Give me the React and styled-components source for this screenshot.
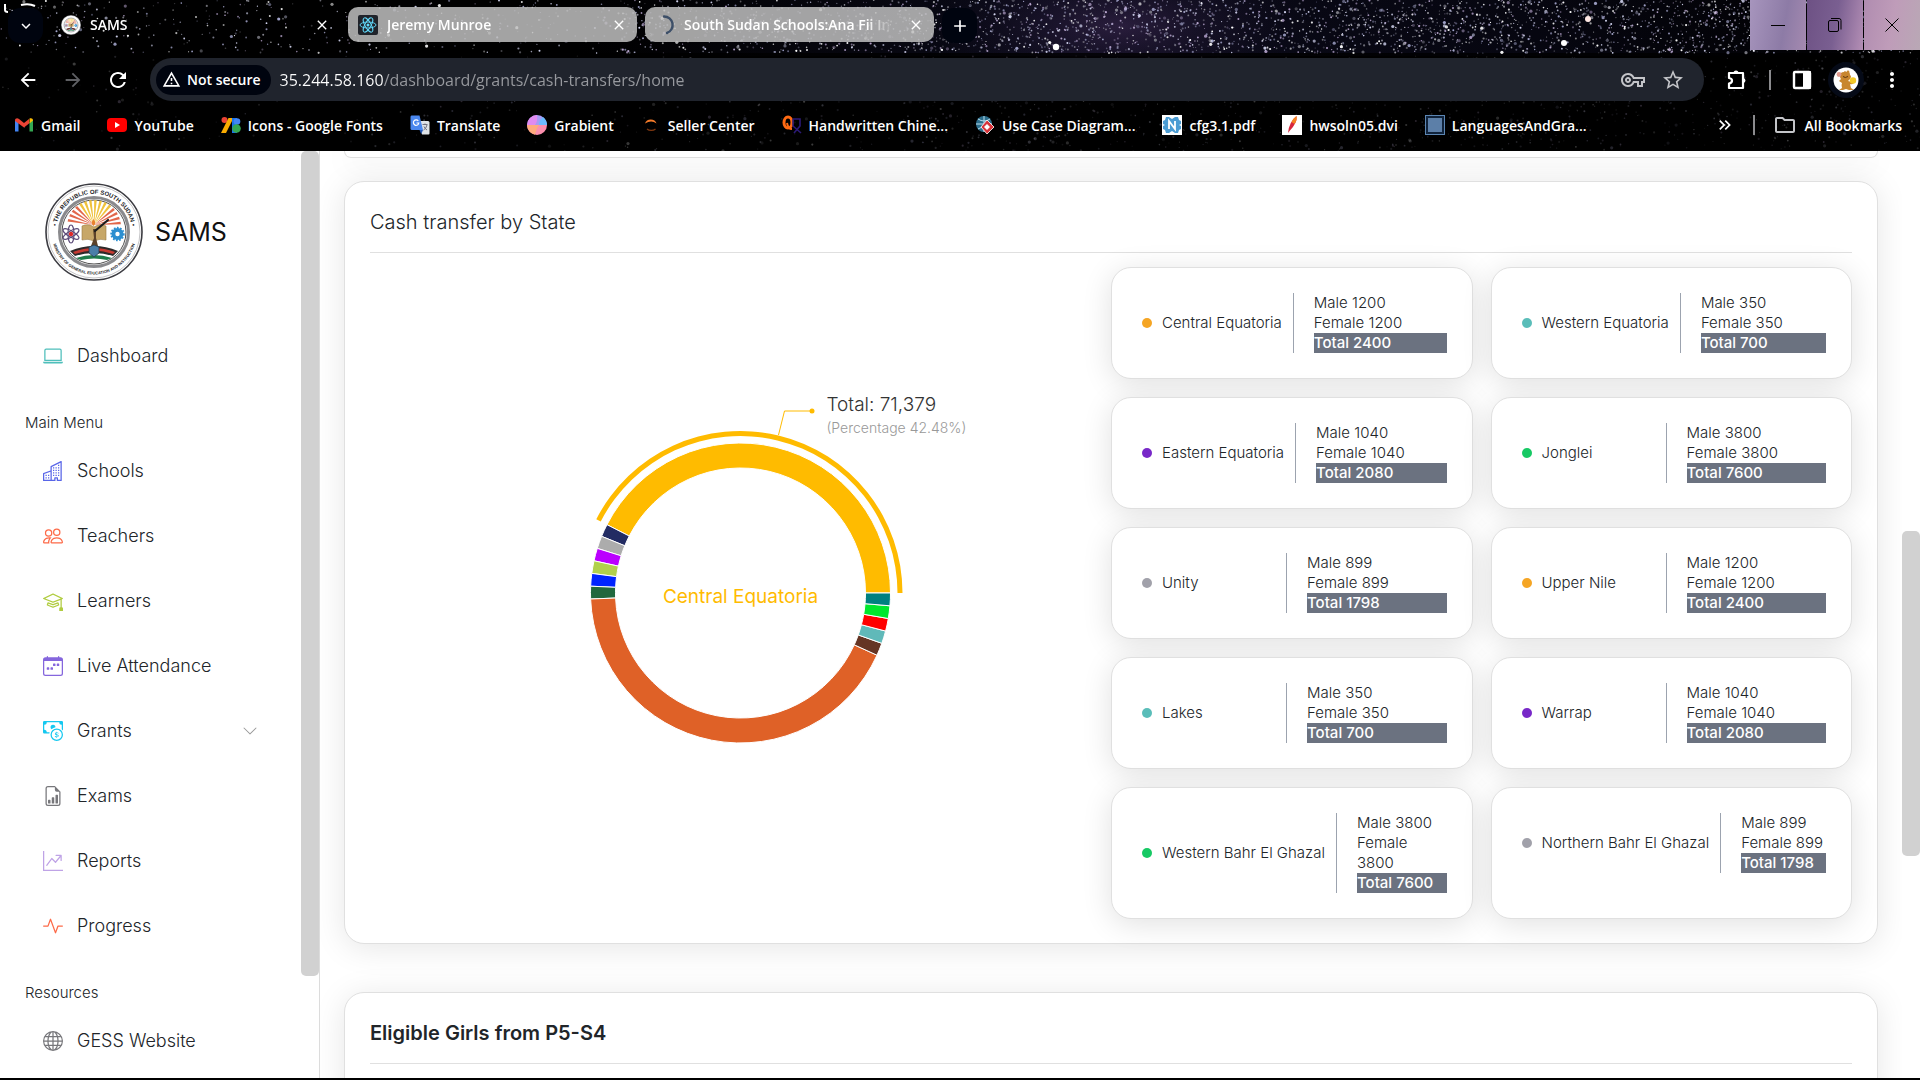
import React from 'react';
import styled, { createGlobalStyle } from 'styled-components';
import {
  BsLaptop, BsBuildings, BsPeople, BsMortarboard, BsCalendarWeek, BsCashCoin,
  BsFileEarmarkBarGraph, BsGraphUpArrow, BsActivity, BsGlobe, BsChevronDown,
} from 'react-icons/bs';
import {
  MdArrowBack, MdArrowForward, MdRefresh, MdOutlineWarningAmber, MdOutlineVpnKey,
  MdStarBorder, MdMoreVert, MdOutlineFolder, MdClose, MdAdd, MdExpandMore, MdKeyboardDoubleArrowRight,
} from 'react-icons/md';

const GlobalStyle = createGlobalStyle`
  *, *::before, *::after { box-sizing: border-box; }
  body { margin: 0; background: #fff; font-family: Inter, "Liberation Sans", sans-serif; font-weight: 300; color: #212529; overflow: hidden; }
  button { border: 0; padding: 0; margin: 0; background: none; color: inherit; font: inherit; cursor: pointer; }
  a { color: inherit; text-decoration: none; }
  svg { display: block; flex: none; }
  h1, h2, p { margin: 0; font-weight: inherit; }
`;

const Shell = styled.div`
  display: flex;
  flex-direction: column;
  height: 100vh;
  border-bottom: 2px solid #000;
`;

/* ---------- browser frame ---------- */

const Chrome = styled.header`
  position: relative;
  flex: none;
  background: #000;
  color: #fff;
  font-family: "Open Sans", "Noto Sans", sans-serif;
  font-size: 14px;
  font-weight: 600;
`;

const Sky = styled.svg`
  position: absolute;
  inset: 0;
  width: 100%;
  height: 100%;
`;

const ChromeRows = styled.div`
  position: relative;
`;

const TabStrip = styled.div`
  display: flex;
  align-items: flex-start;
  height: 58px;
  padding-left: 8px;
`;

const RoundButton = styled.button`
  display: flex;
  align-items: center;
  justify-content: center;
  width: 35px;
  height: 35px;
  margin: 8px 0 0 ${(p) => (p.$apart ? 8 : 0)}px;
  border-radius: 12px;
  background: #00040f;
`;

const Tab = styled.div`
  display: flex;
  align-items: center;
  gap: 9px;
  width: 289px;
  height: 35px;
  margin: 7px 0 0 8px;
  padding: 0 10px;
  border-radius: 10px;
  background: ${(p) => (p.$active ? 'transparent' : 'rgba(190, 190, 190, 0.86)')};
`;

const TabTitle = styled.button`
  flex: 1;
  min-width: 0;
  overflow: hidden;
  white-space: nowrap;
  text-align: left;
  mask-image: linear-gradient(to right, #000 85%, transparent 97%);
`;

const WindowControls = styled.div`
  display: flex;
  gap: 1px;
  height: 50px;
  margin-left: auto;
`;

const WindowButton = styled.button`
  display: flex;
  align-items: center;
  justify-content: center;
  width: 56px;
  color: #000;
  background: ${(p) => p.$sky};
`;

const Toolbar = styled.div`
  display: flex;
  align-items: center;
  height: 43px;
`;

const NavButton = styled.button`
  display: flex;
  align-items: center;
  justify-content: center;
  width: 45px;
  height: 35px;
  color: ${(p) => (p.$dim ? '#5f6064' : '#fff')};
`;

const NavGroup = styled.div`
  display: flex;
  padding: 0 10px 0 5px;
`;

const AddressBar = styled.div`
  display: flex;
  align-items: center;
  flex: 1;
  height: 43px;
  padding: 0 19px 0 6px;
  border-radius: 22px;
  background: #20242d;
  color: #c3c4c8;
`;

const SecurityChip = styled.button`
  display: flex;
  align-items: center;
  gap: 6px;
  height: 30px;
  padding: 0 10px 0 6px;
  border-radius: 15px;
  background: #00040f;
  color: #fff;
`;

const UrlInput = styled.input`
  flex: 1;
  min-width: 0;
  margin-left: 9px;
  padding: 0;
  border: 0;
  outline: 0;
  font: 400 16px/24px "Open Sans", "Noto Sans", sans-serif;
  color: transparent;
  background: linear-gradient(to right, #fff 104px, #989a9f 104px);
  -webkit-background-clip: text;
  background-clip: text;
`;

const BarIcons = styled.div`
  display: flex;
  align-items: center;
  gap: 16px;
`;

const ToolbarEnd = styled.div`
  display: flex;
  align-items: center;
  padding: 0 16px 0 22px;
  gap: 21px;
`;

const ProfileButton = styled.button`
  margin: 0 -5px;
`;

const Separator = styled.span`
  width: 2px;
  height: 20px;
  background: #8b8b8e;
`;

const Bookmarks = styled.nav`
  display: flex;
  align-items: center;
  height: 50px;
  padding: 0 18px 2px 14px;
`;

const BookmarkLink = styled.a`
  display: flex;
  align-items: center;
  gap: 7px;
  margin-right: 27px;
  white-space: nowrap;
`;

const BookmarksEnd = styled.div`
  display: flex;
  align-items: center;
  gap: 18px;
  margin-left: auto;
`;

const AllBookmarks = styled.button`
  display: flex;
  align-items: center;
  gap: 8px;
`;

/* ---------- page ---------- */

const Page = styled.div`
  display: flex;
  flex: 1;
  min-height: 0;
`;

const Sidebar = styled.aside`
  display: flex;
  flex: none;
  width: 320px;
  border-right: 1px solid #dcdcdc;
`;

const SidebarBody = styled.div`
  flex: 1;
  padding-top: 32px;
  overflow: hidden;
`;

const Brand = styled.div`
  display: flex;
  align-items: center;
  gap: 12px;
  padding: 0 0 42px 45px;
  font-size: 25px;
  font-weight: 400;
  color: #111;
`;

const NavLink = styled.a`
  display: flex;
  align-items: center;
  gap: 14px;
  height: 65px;
  padding: 0 43px;
  font-size: 18px;
  color: #212529;

  svg:first-child { color: ${(p) => p.$tint}; }
  svg + span { flex: 1; }
`;

const NavLabel = styled.p`
  height: 50px;
  padding: 23px 25px 3px;
  font-size: 15px;
  line-height: 24px;
`;

const ScrollTrack = styled.div`
  flex: none;
  width: 18px;
`;

const Thumb = styled.div`
  height: ${(p) => p.$size}%;
  border-radius: 5px;
  background: #d1d1d1;
`;

const TrackSpace = styled.div`
  height: ${(p) => p.$size}%;
`;

const Main = styled.main`
  flex: 1;
  min-width: 0;
  padding: 0 24px;
  overflow: hidden;
`;

const Panel = styled.section`
  padding: 0 25px 24px;
  margin-bottom: ${(p) => p.$space || 24}px;
  border: 1px solid #e0e0e0;
  border-radius: 20px;
  background: #fff;
  box-shadow: 0 4px 32px rgba(0, 0, 0, 0.1);
`;

const PanelEnd = styled.div`
  height: 7px;
  margin-bottom: 23px;
  border: 1px solid #e0e0e0;
  border-top: 0;
  border-radius: 0 0 20px 20px;
  box-shadow: 0 4px 32px rgba(0, 0, 0, 0.1);
`;

const PanelTitle = styled.h2`
  height: 71px;
  padding-top: 26px;
  margin-bottom: 14px;
  border-bottom: 1px solid #e0e0e0;
  font-size: 20px;
  line-height: 28px;
  font-weight: ${(p) => (p.$strong ? 600 : 300)};
`;

const Split = styled.div`
  display: grid;
  grid-template-columns: 1fr 1fr;
  align-items: center;
`;

const ChartSvg = styled.svg`
  width: 100%;
  height: 500px;
  font-family: Inter, "Liberation Sans", sans-serif;
`;

const StateGrid = styled.div`
  display: grid;
  grid-template-columns: 1fr 1fr;
  gap: 18px;
`;

const StateCard = styled.article`
  padding: 25px;
  border: 1px solid #e0e0e0;
  border-radius: 20px;
  background: #fff;
  box-shadow: 0 5px 30px rgba(0, 0, 0, 0.12);
  font-size: 15px;
  line-height: 20px;
`;

const StateRow = styled.div`
  display: flex;
`;

const StateName = styled.div`
  display: flex;
  align-items: center;
  flex: none;
  gap: 10px;
  min-width: 150px;
  padding: 0 11px 0 5px;
  white-space: nowrap;
  border-right: 1px solid #9ca3af;

  &::before {
    content: "";
    width: 10px;
    height: 10px;
    border-radius: 50%;
    background: ${(p) => p.$dot};
  }
`;

const Figures = styled.div`
  flex: 1;
  min-width: 0;
  margin-left: 20px;
`;

const Total = styled.p`
  background: #6b7280;
  color: #fff;
  font-weight: 500;
`;

/* ---------- drawings ---------- */

function makeStars() {
  let seed = 77;
  const rnd = () => {
    seed = (seed * 16807) % 2147483647;
    return seed / 2147483647;
  };
  const tones = ['#ffffff', '#d5d7f2', '#a4a6cc', '#9a9aa4', '#b9a6cf'];
  const out = [];
  const scatter = (count, top, bottom, low, high) => {
    for (let i = 0; i < count; i += 1) {
      const x = rnd() * 1920;
      const y = top + rnd() * (bottom - top);
      const keep = x < 620 ? 0.25 : x > 900 ? 1 : 0.6;
      const opacity = low + rnd() * (high - low);
      const tone = tones[Math.floor(rnd() * 5)];
      const r = rnd() > 0.95 ? 1.6 : 0.5 + rnd() * 0.6;
      if (rnd() < keep) out.push({ x, y, tone, opacity, r });
    }
  };
  scatter(5200, 0, 53, 0.3, 1);
  scatter(2200, 56, 151, 0.08, 0.24);
  return out;
}
const STARS = makeStars();

const Starfield = () => (
  <Sky viewBox="0 0 1920 151" preserveAspectRatio="xMidYMid slice" aria-hidden="true">
    <defs>
      <radialGradient id="haze">
        <stop offset="0" stopColor="#4a3163" stopOpacity="0.5" />
        <stop offset="1" stopColor="#1a1430" stopOpacity="0" />
      </radialGradient>
      <linearGradient id="night">
        <stop offset="0.3" stopColor="#000" />
        <stop offset="0.55" stopColor="#0a0a18" />
        <stop offset="0.8" stopColor="#060610" />
        <stop offset="1" stopColor="#000" />
      </linearGradient>
    </defs>
    <rect width="1920" height="56" fill="url(#night)" />
    <ellipse cx="1120" cy="26" rx="190" ry="70" fill="url(#haze)" />
    <rect y="53" width="1920" height="98" fill="#000" fillOpacity="0.75" />
    {STARS.map((s, i) => (
      <circle key={i} cx={s.x.toFixed(1)} cy={s.y.toFixed(1)} r={s.r.toFixed(1)} fill={s.tone} opacity={s.opacity.toFixed(2)} />
    ))}
    <circle cx="1056" cy="47" r="3.2" fill="#fff" />
    <circle cx="1564" cy="43" r="3" fill="#fff" />
    <circle cx="1588" cy="19" r="3" fill="#ffe9e4" />
    <path d="M5 4v6q0 2 3 2M21 5q8-2 14 1" stroke="#fff" strokeWidth="2" fill="none" />
  </Sky>
);

const rays = Array.from({ length: 15 }, (_, i) => 192 + i * 11.2);

const Emblem = ({ size }) => (
  <svg width={size} height={size} viewBox="0 0 98 98" role="img" aria-label="Ministry emblem">
    <defs>
      <path id={`top${size}`} d="M11.500 55 A38 38 0 1 1 86.500 55" />
      <path id={`low${size}`} d="M6.500 49 A42.500 42.500 0 0 0 91.500 49" />
    </defs>
    <circle cx="49" cy="49" r="48" fill="#fff" stroke="#3c3c42" strokeWidth="1.600" />
    <circle cx="49" cy="49" r="46" fill="none" stroke="#b5b5b8" strokeWidth="0.800" />
    <circle cx="49" cy="49" r="34.500" fill="#fff" stroke="#8a8a8d" strokeWidth="3" />
    <circle cx="49" cy="49" r="32" fill="#fff" stroke="#222" strokeWidth="0.800" />
    {rays.map((a, i) => {
      const r1 = (a * Math.PI) / 180;
      const r2 = ((a + 5.5) * Math.PI) / 180;
      return (
        <path
          key={a}
          d={`M49 42 L${49 + 27 * Math.cos(r1)} ${44 + 27 * Math.sin(r1)} L${49 + 27 * Math.cos(r2)} ${44 + 27 * Math.sin(r2)}Z`}
          fill={i < 4 || i > 10 ? '#e2674a' : '#efc23c'}
        />
      );
    })}
    <path d="M37 43q6-3 12 1 6-4 12-1v14q-6-2-12 1-6-3-12-1z" fill="#c7a768" stroke="#9a7b42" strokeWidth="0.600" />
    <path d="M48 46l3 0 0 9 2 8h-7l3-8z" fill="#5d432a" />
    <path d="M48.500 36q3.500 4 0 7-3.500-3 0-7z" fill="#e8812e" />
    <path d="M50 48l13-11" stroke="#1d1d1d" strokeWidth="2.200" strokeLinecap="round" />
    <g fill="none" stroke="#5b4a78" strokeWidth="1.100">
      <ellipse cx="26" cy="51" rx="3" ry="9" />
      <ellipse cx="26" cy="51" rx="3" ry="9" transform="rotate(60 26 51)" />
      <ellipse cx="26" cy="51" rx="3" ry="9" transform="rotate(120 26 51)" />
    </g>
    <circle cx="26" cy="51" r="2.200" fill="#e02828" />
    <circle cx="72.500" cy="51" r="6" fill="#2d8fd0" stroke="#2d8fd0" strokeWidth="2.400" strokeDasharray="1.600 1.400" />
    <circle cx="72.500" cy="51" r="2.200" fill="#fff" />
    <path d="M25 68q24-10 48 0l-5 5q-19-6-38 0z" fill="#2d2a2a" />
    <path d="M28 69q21-8 42 0l-2 2q-19-7-38 0z" fill="#c63a32" />
    <path d="M31 75q18-6 36 0l-5 2q-13-3-26 0z" fill="#1f7d4c" />
    <path d="M44 64l5-2 5 2v6l-5 4-5-4z" fill="#4a7ea8" stroke="#263b4c" strokeWidth="0.800" />
    {size > 40 && (
      <g fontFamily="Liberation Sans, sans-serif" fontWeight="700" fill="#26262a">
        <text fontSize="6" textAnchor="middle"><textPath href={`#top${size}`} startOffset="50%">• THE REPUBLIC OF SOUTH SUDAN •</textPath></text>
        <text fontSize="4" textAnchor="middle"><textPath href={`#low${size}`} startOffset="50%">MINISTRY OF GENERAL EDUCATION AND INSTRUCTION</textPath></text>
      </g>
    )}
  </svg>
);

const Glyph = ({ children, size = 20 }) => (
  <svg width={size} height={size} viewBox="0 0 20 20" aria-hidden="true">{children}</svg>
);

const ReactMark = () => (
  <Glyph>
    <rect width="20" height="20" rx="2" fill="#20232a" />
    <g fill="none" stroke="#61dafb" strokeWidth="0.900">
      <ellipse cx="10" cy="10" rx="8" ry="3" />
      <ellipse cx="10" cy="10" rx="8" ry="3" transform="rotate(60 10 10)" />
      <ellipse cx="10" cy="10" rx="8" ry="3" transform="rotate(120 10 10)" />
    </g>
    <circle cx="10" cy="10" r="1.500" fill="#61dafb" />
  </Glyph>
);

const Spinner = () => (
  <Glyph><path d="M9 1.500A8.500 8.500 0 0 1 12 18" fill="none" stroke="#3d4f68" strokeWidth="2.400" strokeLinecap="round" /></Glyph>
);

const BOOKMARKS = [
  ['Gmail', <Glyph key="i"><path d="M1 16.500V4.500l3.500 2.500v9.500z" fill="#4285f4" /><path d="M19 16.500V4.500L15.500 7v9.500z" fill="#34a853" /><path d="M1 5.500C1 3 3.500 2.700 5 4l5 4 5-4v4.600L10 12.600 4.500 8.500 1 6z" fill="#ea4335" /><path d="M15.500 3.600C17 2.700 19 3.200 19 5.500L15.500 8.500z" fill="#fbbc04" /></Glyph>],
  ['YouTube', <Glyph key="i"><rect y="3" width="20" height="14" rx="4" fill="#f00" /><path d="M8 7l5 3-5 3z" fill="#fff" /></Glyph>],
  ['Icons - Google Fonts', <Glyph key="i"><circle cx="3.500" cy="5" r="3" fill="#ea4335" /><path d="M7.500 3h5L5 18H0z" fill="#f9ab00" /><path d="M11 3h5v15h-5z" fill="#1a73e8" /><circle cx="16" cy="6.500" r="3.300" fill="#4285f4" /><circle cx="15.500" cy="13.500" r="4.300" fill="#34a853" /></Glyph>],
  ['Translate', <Glyph key="i"><path d="M8 6h10q1.500 0 1.500 1.500v11q0 1-1 1H12z" fill="#dfe3e8" /><path d="M1.500.500h8L13 15H2q-1.500 0-1.500-1.500V2q0-1.500 1-1.500z" fill="#4a87ee" /><path d="M8.300 6A2.700 2.700 0 1 0 8.800 8H6.500" fill="none" stroke="#fff" strokeWidth="1.200" /><path d="M12.500 9.500h5M15 8.500v1M17 10q-1 4-3.500 5M14 11.500q1 2.500 3 3.500" stroke="#667" strokeWidth="0.900" fill="none" /><path d="M9.500 15h3.500l-1.800 4z" fill="#2457b5" /></Glyph>],
  ['Grabient', <Glyph key="i"><path d="M0 10a10 10 0 0 1 20 0z" fill="#a69bf5" /><path d="M0 10a10 10 0 0 1 10-10q1 6-2 10z" fill="#e08bf0" /><path d="M12 10q0-5 4-8 4 3 4 8z" fill="#6bbcff" /><path d="M0 10a10 10 0 0 0 20 0z" fill="#fb8fae" /><path d="M0 10a10 10 0 0 0 8 9.800Q9 14 12 10z" fill="#ffab7d" /></Glyph>],
  ['Seller Center', <Glyph key="i"><path d="M4 8.500a6 5.500 0 0 1 11.500 0q-5-4-11.500 0z" fill="#f47b2a" /><path d="M6 14a6 5 0 0 0 8.500 0" fill="none" stroke="#7e3710" strokeWidth="1.300" /></Glyph>],
  ['Handwritten Chine...', <Glyph key="i"><ellipse cx="6" cy="7.500" rx="4" ry="5.500" fill="none" stroke="#ff6a13" strokeWidth="3" /><path d="M5 8q1 6 5 6" stroke="#ff6a13" strokeWidth="2" fill="none" /><path d="M11 4h7v7l-6 7M11 11l8 7M11 4v7" stroke="#2c1a78" strokeWidth="1.600" fill="none" /></Glyph>],
  ['Use Case Diagram...', <Glyph key="i"><circle cx="9" cy="9" r="8" fill="#2c6d8c" /><path d="M1 9h16M9 1v16M3 4q6 4 12 0M3 14q6-4 12 0" stroke="#b8dfee" strokeWidth="1" fill="none" /><path d="M12 5l7 7-7 7-6-7z" fill="#d8343a" stroke="#fff" strokeWidth="0.800" /><path d="M12 9l3 3-3 3-3-3z" fill="#fff" /></Glyph>],
  ['cfg3.1.pdf', <Glyph key="i"><rect width="20" height="20" fill="#fff" /><path d="M4 2h3l3 2 3-2h3l1 3 2 1v3l-2 1 2 1v3l-2 1-1 3h-3l-3-2-3 2H4l-1-3-2-1v-3l2-1-2-1V6l2-1z" fill="#4b9cd3" /><path d="M7 14V6l6 8V6" stroke="#fff" strokeWidth="1.800" fill="none" /></Glyph>],
  ['hwsoln05.dvi', <Glyph key="i"><rect width="20" height="20" fill="#fff" /><path d="M14.500 1q1 7-7 15l-1.500 2Q7 7 14.500 1z" fill="#d7263d" /><path d="M14.500 1q1 4-2 8l-3-2q2-4 5-6z" fill="#f5821f" /></Glyph>],
  ['LanguagesAndGra...', <Glyph key="i"><rect x="0.500" y="0.500" width="19" height="19" fill="#10233b" stroke="#5c86b3" /><rect x="3" y="3" width="14" height="14" fill="#5c7fa8" /></Glyph>],
];

const Puzzle = () => (
  <svg width="22" height="22" viewBox="0 0 22 22" aria-hidden="true">
    <path d="M3 4h14v5.500V19H3v-4.500q3-.500 3-2.800T3 9z" fill="none" stroke="#fff" strokeWidth="2.200" strokeLinejoin="round" />
    <path d="M7.500 4a2.500 2.500 0 0 1 5 0zM17 9a2.500 2.500 0 0 1 0 5z" fill="#fff" />
  </svg>
);

const SidePanelIcon = () => (
  <svg width="20" height="20" viewBox="0 0 20 20" aria-hidden="true">
    <rect x="2" y="2" width="16" height="16" rx="1" fill="none" stroke="#fff" strokeWidth="2.400" />
    <path d="M11 1h7q1 0 1 1v16q0 1-1 1h-7z" fill="#fff" />
  </svg>
);

const Avatar = () => (
  <svg width="36" height="36" viewBox="0 0 36 36" aria-hidden="true">
    <circle cx="18" cy="18" r="18" fill="#050a17" />
    <circle cx="18" cy="18" r="12.500" fill="#fff" />
    <path d="M12 14q0-4 4-4 1-2 2 0 4-1 4 3 2 1 0 4l-2 2q4 1 4 0l2 2q-2 2-4 1l1 4 3 2h-5l-3-1-3 1h-4l3-2q-1-3 0-5l-3-2 2-2q-1-1-1-3z" fill="#c8862f" />
    <circle cx="11" cy="12.500" r="2.400" fill="#e09a90" />
    <circle cx="20" cy="10" r="1.400" fill="#c8862f" />
    <path d="M15 14.500q2 2 5 0" stroke="#5b3310" fill="none" />
    <circle cx="25" cy="18.500" r="3.200" fill="#f3c928" />
  </svg>
);

/* ---------- donut ---------- */

const SLICES = [
  [0, 152.9, '#ffbb00'], [152.9, 157.8, '#232c63'], [157.8, 162.7, '#acacac'],
  [162.7, 167.6, '#bb00ff'], [167.6, 172.5, '#b1d04c'], [172.5, 177.4, '#0024ff'],
  [177.4, 182.3, '#22683e'], [182.3, 335.5, '#df6127'], [335.5, 340.4, '#653524'],
  [340.4, 345.3, '#60b9b9'], [345.3, 350.2, '#ff0000'], [350.2, 355.1, '#00e72d'], [355.1, 360, '#008080'],
];

function ring(from, to, inner, outer) {
  const at = (deg, r) => {
    const a = (-deg * Math.PI) / 180;
    return `${(r * Math.cos(a)).toFixed(2)} ${(r * Math.sin(a)).toFixed(2)}`;
  };
  const large = to - from > 180 ? 1 : 0;
  return `M${at(from, outer)} A${outer} ${outer} 0 ${large} 0 ${at(to, outer)} L${at(to, inner)} A${inner} ${inner} 0 ${large} 1 ${at(from, inner)}Z`;
}

const Donut = () => (
  <ChartSvg viewBox="-370 -250 740 500" role="img" aria-label="Cash transfer share by state">
    {SLICES.map(([from, to, color]) => (
      <path key={from} d={ring(from, to, 125, 150)} fill={color} stroke="#fff" />
    ))}
    <path d={ring(0, 152.9, 157, 162)} fill="#ffbb00" />
    <path d="M38 -158 L44 -182 L71 -182" fill="none" stroke="#ffbb00" />
    <circle cx="71.500" cy="-182" r="2.500" fill="#ffbb00" />
    <text x="0" y="10" textAnchor="middle" fontSize="19" fontWeight="400" fill="#ffbb00">Central Equatoria</text>
    <text x="86" y="-182" fontSize="19" fill="#333">Total: 71,379</text>
    <text x="86" y="-160" fontSize="14" fill="#999">(Percentage 42.48%)</text>
  </ChartSvg>
);

/* ---------- data ---------- */

const MENU = [
  ['Schools', BsBuildings, '#5865e8'],
  ['Teachers', BsPeople, '#fd6a48'],
  ['Learners', BsMortarboard, '#b0cc3f'],
  ['Live Attendance', BsCalendarWeek, '#8566dd'],
  ['Grants', BsCashCoin, '#14c8f0'],
  ['Exams', BsFileEarmarkBarGraph, '#77777b'],
  ['Reports', BsGraphUpArrow, '#bfa3e6'],
  ['Progress', BsActivity, '#fd6a48'],
];

const STATES = [
  ['Central Equatoria', '#f5a524', 1200], ['Western Equatoria', '#5abdb9', 350],
  ['Eastern Equatoria', '#7828c8', 1040], ['Jonglei', '#17c964', 3800],
  ['Unity', '#a1a1aa', 899], ['Upper Nile', '#f5a524', 1200],
  ['Lakes', '#5abdb9', 350], ['Warrap', '#7828c8', 1040],
  ['Western Bahr El Ghazal', '#17c964', 3800], ['Northern Bahr El Ghazal', '#a1a1aa', 899],
];

const MenuItem = ({ label, Icon, tint, expandable }) => (
  <NavLink href="#" $tint={tint}>
    <Icon size={20} />
    <span>{label}</span>
    {expandable && <BsChevronDown size={16} color="#999" />}
  </NavLink>
);

const BrowserFrame = () => (
  <Chrome>
    <Starfield />
    <ChromeRows>
      <TabStrip>
        <RoundButton aria-label="Search tabs"><MdExpandMore size={18} /></RoundButton>
        <Tab $active>
          <Emblem size={20} />
          <TabTitle>SAMS</TabTitle>
          <button aria-label="Close SAMS"><MdClose size={16} /></button>
        </Tab>
        <Tab>
          <ReactMark />
          <TabTitle>Jeremy Munroe</TabTitle>
          <button aria-label="Close Jeremy Munroe"><MdClose size={16} /></button>
        </Tab>
        <Tab>
          <Spinner />
          <TabTitle>South Sudan Schools:Ana Fii In</TabTitle>
          <button aria-label="Close South Sudan Schools"><MdClose size={16} /></button>
        </Tab>
        <RoundButton aria-label="New tab" $apart><MdAdd size={20} /></RoundButton>
        <WindowControls>
          <WindowButton aria-label="Minimize" $sky="linear-gradient(100deg, #a795bd, #8d7ba6 60%, #a58ab0)">
            <svg width="14" height="14" viewBox="0 0 14 14"><path d="M0 7.500h14" stroke="#000" /></svg>
          </WindowButton>
          <WindowButton aria-label="Restore" $sky="linear-gradient(100deg, #6d5184, #7a5f91 50%, #b48fb5)">
            <svg width="14" height="14" viewBox="0 0 14 14"><rect x="0.500" y="2.500" width="10" height="11" rx="1.500" fill="none" stroke="#000" /><path d="M3 .500h8q2 0 2 2v9" fill="none" stroke="#000" /></svg>
          </WindowButton>
          <WindowButton aria-label="Close window" $sky="linear-gradient(100deg, #b08cb0, #bf9cb9 50%, #b9a8b5)">
            <svg width="14" height="14" viewBox="0 0 14 14"><path d="M.500 .500l13 13M13.500 .500l-13 13" stroke="#000" /></svg>
          </WindowButton>
        </WindowControls>
      </TabStrip>
      <Toolbar>
        <NavGroup>
          <NavButton aria-label="Back"><MdArrowBack size={22} /></NavButton>
          <NavButton aria-label="Forward" $dim><MdArrowForward size={22} /></NavButton>
          <NavButton aria-label="Reload"><MdRefresh size={24} /></NavButton>
        </NavGroup>
        <AddressBar>
          <SecurityChip><MdOutlineWarningAmber size={19} />Not secure</SecurityChip>
          <UrlInput aria-label="Address" defaultValue="35.244.58.160/dashboard/grants/cash-transfers/home" />
          <BarIcons>
            <MdOutlineVpnKey size={24} />
            <MdStarBorder size={24} />
          </BarIcons>
        </AddressBar>
        <ToolbarEnd>
          <Puzzle />
          <Separator />
          <SidePanelIcon />
          <ProfileButton aria-label="Profile"><Avatar /></ProfileButton>
          <MdMoreVert size={24} />
        </ToolbarEnd>
      </Toolbar>
      <Bookmarks aria-label="Bookmarks">
        {BOOKMARKS.map(([name, icon]) => (
          <BookmarkLink key={name} href="#">{icon}{name}</BookmarkLink>
        ))}
        <BookmarksEnd>
          <MdKeyboardDoubleArrowRight size={20} />
          <Separator />
          <AllBookmarks><MdOutlineFolder size={24} color="#c3c4c8" />All Bookmarks</AllBookmarks>
        </BookmarksEnd>
      </Bookmarks>
    </ChromeRows>
  </Chrome>
);

export default function App() {
  return (
    <Shell>
      <GlobalStyle />
      <BrowserFrame />
      <Page>
        <Sidebar>
          <SidebarBody>
            <Brand><Emblem size={98} />SAMS</Brand>
            <nav>
              <MenuItem label="Dashboard" Icon={BsLaptop} tint="#4fbfbb" />
              <NavLabel>Main Menu</NavLabel>
              {MENU.map(([label, Icon, tint]) => (
                <MenuItem key={label} label={label} Icon={Icon} tint={tint} expandable={label === 'Grants'} />
              ))}
              <NavLabel>Resources</NavLabel>
              <MenuItem label="GESS Website" Icon={BsGlobe} tint="#77777b" />
            </nav>
          </SidebarBody>
          <ScrollTrack><Thumb $size={89} /></ScrollTrack>
        </Sidebar>
        <Main>
          <PanelEnd />
          <Panel $space={48}>
            <PanelTitle>Cash transfer by State</PanelTitle>
            <Split>
              <Donut />
              <StateGrid>
                {STATES.map(([name, dot, count]) => (
                  <StateCard key={name}>
                    <StateRow>
                      <StateName $dot={dot}>{name}</StateName>
                      <Figures>
                        <p>Male {count}</p>
                        <p>Female {count}</p>
                        <Total>Total {count * 2}</Total>
                      </Figures>
                    </StateRow>
                  </StateCard>
                ))}
              </StateGrid>
            </Split>
          </Panel>
          <Panel>
            <PanelTitle $strong>Eligible Girls from P5-S4</PanelTitle>
          </Panel>
        </Main>
        <ScrollTrack>
          <TrackSpace $size={41} />
          <Thumb $size={35} />
        </ScrollTrack>
      </Page>
    </Shell>
  );
}
